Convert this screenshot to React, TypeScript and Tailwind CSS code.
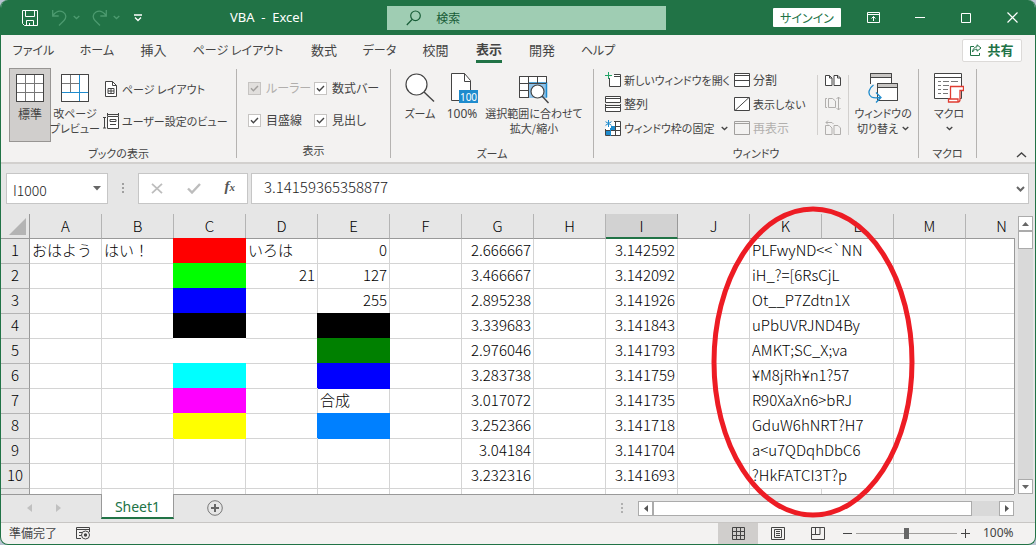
import { useState } from "react";
import type { ReactNode } from "react";

const tabs = [
  { label: "ファイル", width: "w-[65px] text-xs" },
  { label: "ホーム", width: "w-[62px] text-xs" },
  { label: "挿入", width: "w-[51px]" },
  { label: "ページ レイアウト", width: "w-[118px] text-xs" },
  { label: "数式", width: "w-[54px]" },
  { label: "データ", width: "w-[57px] text-xs" },
  { label: "校閲", width: "w-[55px]" },
  { label: "表示", width: "w-[52px]" },
  { label: "開発", width: "w-[54px]" },
  { label: "ヘルプ", width: "w-[58px] text-xs" },
];

const columns = ["A", "B", "C", "D", "E", "F", "G", "H", "I", "J", "K", "L", "M", "N"];

type Cell = { text?: string; fill?: string; right?: boolean };

const colG = ["2.666667", "3.466667", "2.895238", "3.339683", "2.976046", "3.283738", "3.017072", "3.252366", "3.04184", "3.232316"];
const colI = ["3.142592", "3.142092", "3.141926", "3.141843", "3.141793", "3.141759", "3.141735", "3.141718", "3.141704", "3.141693"];
const colK = ["PLFwyND<<`NN", "iH_?=[6RsCjL", "Ot__P7Zdtn1X", "uPbUVRJND4By", "AMKT;SC_X;va", "¥M8jRh¥n1?57", "R90XaXn6>bRJ", "GduW6hNRT?H7", "a<u7QDqhDbC6", "?HkFATCI3T?p"];

const cells: Record<string, Cell> = {
  A1: { text: "おはよう" },
  B1: { text: "はい！" },
  C1: { fill: "#ff0000" },
  C2: { fill: "#00ff00" },
  C3: { fill: "#0000ff" },
  C4: { fill: "#000000" },
  C5: { fill: "#ffffff" },
  C6: { fill: "#00ffff" },
  C7: { fill: "#ff00ff" },
  C8: { fill: "#ffff00" },
  D1: { text: "いろは" },
  D2: { text: "21", right: true },
  E1: { text: "0", right: true },
  E2: { text: "127", right: true },
  E3: { text: "255", right: true },
  E4: { fill: "#000000" },
  E5: { fill: "#008000" },
  E6: { fill: "#0000ff" },
  E7: { text: "合成" },
  E8: { fill: "#0080ff" },
};
colG.forEach((text, i) => (cells[`G${i + 1}`] = { text, right: true }));
colI.forEach((text, i) => (cells[`I${i + 1}`] = { text, right: true }));
colK.forEach((text, i) => (cells[`K${i + 1}`] = { text }));

function Svg({ w, h, children, className = "" }: { w: number; h: number; children: ReactNode; className?: string }) {
  return (
    <svg width={w} height={h} viewBox={`0 0 ${w} ${h}`} fill="none" stroke="#444" className={`shrink-0 ${className}`} aria-hidden="true">
      {children}
    </svg>
  );
}

function Chevron({ color = "#444" }: { color?: string }) {
  return (
    <Svg w={7} h={5}>
      <path d="M.7 1l2.8 2.6L6.3 1" stroke={color} strokeWidth="1.3" />
    </Svg>
  );
}

function TitleBar() {
  return (
    <header className="grid h-[35px] shrink-0 grid-cols-[387fr_279fr_370fr] items-center bg-[#217346] text-white">
      <div className="flex items-center">
        <button aria-label="保存" className="ml-[21px]">
          <Svg w={16} h={16}>
            <path d="M.5.5h15v15H2.5l-2-2zM3.5.5v6h9v-6M4.5 15.5v-5h7v5M7.5 13v2.5" stroke="#fff" />
          </Svg>
        </button>
        <button aria-label="元に戻す" className="ml-[14px] flex items-center gap-[6px]">
          <Svg w={15} h={17}>
            <path d="M.7 1v6h6M1 6.5C4 2.500 8 1.500 11 3c3.500 2 3.500 6 1 8.500L7 16.500" stroke="#4c9a6f" strokeWidth="1.3" />
          </Svg>
          <Chevron color="#4c9a6f" />
        </button>
        <button aria-label="やり直し" className="ml-[12px] flex items-center gap-[6px]">
          <Svg w={15} h={17}>
            <path d="M14.300 1v6h-6M14 6.500C11 2.500 7 1.500 4 3 .5 5 .5 9 3 11.500l5 5" stroke="#4c9a6f" strokeWidth="1.3" />
          </Svg>
          <Chevron color="#4c9a6f" />
        </button>
        <button aria-label="カスタマイズ" className="ml-[14px]">
          <Svg w={8} h={8}>
            <path d="M0 1h8M1 3.500l3 3 3-3" stroke="#fff" strokeWidth="1.3" />
          </Svg>
        </button>
        <h1 className="ml-[88px] font-[Noto_Sans,sans-serif] text-[13px] whitespace-pre">VBA  -  Excel</h1>
      </div>
      <label className="flex h-6 items-center bg-[#9fcdb3] pl-[19px]">
        <Svg w={16} h={16}>
          <circle cx="9.500" cy="5.800" r="4.800" stroke="#185c37" strokeWidth="1.2" />
          <path d="M6 9.500L.8 15" stroke="#185c37" strokeWidth="1.2" />
        </Svg>
        <input aria-label="検索" placeholder="検索" className="ml-[14px] min-w-0 flex-1 bg-transparent text-xs outline-none placeholder:text-[#185c37]" />
      </label>
      <div className="flex items-center justify-end pr-[17px]">
        <button className="mr-[25px] h-[19px] w-[68px] rounded-[1px] bg-white text-xs leading-[19px] text-[#217346]">サインイン</button>
        <button aria-label="リボンの表示オプション" className="flex w-[49px] justify-start pl-px">
          <Svg w={13} h={11}>
            <path d="M.5.5h12v10H.5zM.5 2.500h12M6.500 9V4.500M4.500 6.500l2-2 2 2" stroke="#fff" />
          </Svg>
        </button>
        <button aria-label="最小化" className="flex w-[46px] justify-start">
          <Svg w={10} h={1}>
            <path d="M0 .5h10" stroke="#fff" />
          </Svg>
        </button>
        <button aria-label="最大化" className="flex w-[46px] justify-start">
          <Svg w={10} h={10}>
            <path d="M.5.5h9v9h-9z" stroke="#fff" />
          </Svg>
        </button>
        <button aria-label="閉じる">
          <Svg w={11} h={11}>
            <path d="M.5.5l10 10M10.500.5l-10 10" stroke="#fff" strokeWidth="1.2" />
          </Svg>
        </button>
      </div>
    </header>
  );
}

function TabBar() {
  return (
    <nav className="flex h-[30px] shrink-0 items-center text-[13px]">
      {tabs.map((t) => (
        <button key={t.label} className={`flex h-[30px] shrink-0 items-center justify-center whitespace-nowrap ${t.width}`}>
          {t.label === "表示" ? (
            <span className="h-[25px] border-b-[3px] border-[#217346] pt-px leading-[20px] font-bold">{t.label}</span>
          ) : (
            t.label
          )}
        </button>
      ))}
      <button className="mr-[13px] ml-auto flex h-[23px] w-[60px] items-center justify-center gap-[5px] rounded-[2px] border border-[#dcdad8] bg-white font-bold text-[#217346]">
        <Svg w={12} h={12}>
          <path d="M4 2.500H.5v9h9V9M7 .8l4 3.200-4 3.200V5.200C5 5.200 3.500 6 2.500 8c.2-3 2-5 4.500-5.200z" stroke="#217346" />
        </Svg>
        共有
      </button>
    </nav>
  );
}

function Group({ title, width, children }: { title: string; width: string; children: ReactNode }) {
  return (
    <section className={`my-[4px] flex shrink-0 flex-col border-r border-[#b5b3b1] ${width}`}>
      <div className="-mt-px flex h-[74px]">{children}</div>
      <h2 className="pt-[3px] text-center text-[11px] leading-4">{title}</h2>
    </section>
  );
}

function BigButton({ icon, lines, className = "" }: { icon: ReactNode; lines: ReactNode[]; className?: string }) {
  return (
    <button className={`flex h-[74px] shrink-0 flex-col items-center border pt-1 leading-[15px] whitespace-nowrap ${className}`}>
      <span className="mb-[3px] flex h-[30px] items-center">{icon}</span>
      {lines.map((l, i) => (
        <span key={i} className="flex h-[15px] items-center gap-1">
          {l}
        </span>
      ))}
    </button>
  );
}

function SmallButton({ icon, label, disabled, menu, className = "" }: { icon: ReactNode; label: string; disabled?: boolean; menu?: boolean; className?: string }) {
  return (
    <button disabled={disabled} className={`flex h-6 items-center gap-[3px] whitespace-nowrap disabled:text-[#b1afad] ${className}`}>
      {icon}
      {label}
      {menu && (
        <span className="ml-1">
          <Chevron />
        </span>
      )}
    </button>
  );
}

function Check({ label, disabled }: { label: string; disabled?: boolean }) {
  const [on, setOn] = useState(true);
  return (
    <label className={`flex h-8 items-center gap-[5px] whitespace-nowrap ${disabled ? "text-[#b1afad]" : ""}`}>
      <span className={`relative flex h-[13px] w-[13px] shrink-0 items-center justify-center border border-[#c6c4c2] ${disabled ? "bg-[#e1dfdd]" : "bg-white"}`}>
        <input type="checkbox" checked={on} disabled={disabled} onChange={(e) => setOn(e.target.checked)} className="absolute inset-0 appearance-none" />
        {on && (
          <Svg w={9} h={7}>
            <path d="M1 3.300l2.400 2.400L8 1" stroke={disabled ? "#a19f9d" : "#444"} strokeWidth="1.4" />
          </Svg>
        )}
      </span>
      {label}
    </label>
  );
}

function Ribbon() {
  return (
    <div className="relative flex h-[97px] shrink-0 text-xs">
      <Group title="ブックの表示" width="w-[236px]">
        <BigButton
          className="ml-2 w-[42px] border-[#979593] bg-[#d0cecc]"
          lines={["標準"]}
          icon={
            <Svg w={28} h={28}>
              <path d="M.5.5h27v27H.5z" fill="#fff" />
              <path d="M9.500 1v26M18.500 1v26M1 9.500h26M1 18.500h26" stroke="#777" />
              <path d="M.5.5h27v27H.5z" />
            </Svg>
          }
        />
        <BigButton
          className="w-[48px] border-transparent text-[11px]"
          lines={["改ページ", "プレビュー"]}
          icon={
            <Svg w={28} h={28}>
              <path d="M.5.5h27v27H.5z" fill="#fff" />
              <path d="M9.500 1v17M1 9.500h17" stroke="#777" />
              <path d="M18.500 1v26M1 18.500h26" stroke="#1e8bcd" />
              <path d="M.5.5h27v27H.5z" />
            </Svg>
          }
        />
        <div className="ml-1 flex flex-col gap-2 pt-[9px] text-[11px]">
          <SmallButton
            label="ページ レイアウト"
            icon={
              <Svg w={16} h={16}>
                <path d="M2.500.5h7l4 4v11h-11z" fill="#fff" />
                <path d="M9.500.5v4h4M5 7.500h6v5H5zM8 7.500v5M5 10h6" />
              </Svg>
            }
          />
          <SmallButton
            label="ユーザー設定のビュー"
            icon={
              <Svg w={16} h={16}>
                <path d="M4.500 3.500h11v12h-11z" fill="#fff" />
                <path d="M4 1.500h12M4.500 0v3M15.500 0v3M1.500 4v11M0 4.500h3M0 15h3M7 6.500h6v2H7zM7 11.500h6" />
              </Svg>
            }
          />
        </div>
      </Group>

      <Group title="表示" width="w-[154px]">
        <div className="ml-[11px] grid h-16 grid-cols-[66px_66px] pt-1">
          <Check label="ルーラー" disabled />
          <Check label="数式バー" />
          <Check label="目盛線" />
          <Check label="見出し" />
        </div>
      </Group>

      <Group title="ズーム" width="w-[203px]">
        <BigButton
          className="ml-2 w-[42px] border-transparent text-[11px]"
          lines={["ズーム"]}
          icon={
            <Svg w={30} h={30}>
              <circle cx="11.500" cy="11.500" r="10.500" fill="#fff" strokeWidth="1.2" />
              <path d="M19 19l10 9.500" strokeWidth="1.4" />
            </Svg>
          }
        />
        <BigButton
          className="w-[42px] border-transparent font-[Noto_Sans,sans-serif]"
          lines={["100%"]}
          icon={
            <Svg w={28} h={30} className="ml-1">
              <path d="M1.500.5h13l6 7v20h-19z" fill="#fff" />
              <path d="M14.500.5v8h6" />
              <path d="M9 17h19v13H9z" fill="#1e8bcd" stroke="none" />
              <text x="18.500" y="27.500" textAnchor="middle" fill="#fff" stroke="none" fontSize="10">100</text>
            </Svg>
          }
        />
        <BigButton
          className="w-[102px] border-transparent text-[11px]"
          lines={["選択範囲に合わせて", "拡大/縮小"]}
          icon={
            <Svg w={30} h={28} className="mt-1">
              <path d="M.5.5h27v21H.5z" fill="#fff" />
              <path d="M9 7h19v15H9z" fill="#8fc3ea" stroke="none" />
              <path d="M9.500 7h18v14.500" stroke="#1e8bcd" strokeWidth="1.5" />
              <path d="M9.500 1v21M18.500 1v6M1 7.500h26M1 14.500h8M.5 21.500V.5h27V7M.5 21.500h9" />
              <circle cx="18.500" cy="15.500" r="6.500" fill="#fff" strokeWidth="1.2" />
              <path d="M23 20l6.500 7" strokeWidth="1.4" />
            </Svg>
          }
        />
      </Group>

      <Group title="ウィンドウ" width="w-[325px]">
        <div className="ml-[11px] flex w-[129px] shrink-0 flex-col">
          <SmallButton
            className="text-[11px]"
            label="新しいウィンドウを開く"
            icon={
              <Svg w={16} h={16}>
                <path d="M4.500 6v8.500h11V2.500H9" fill="#fff" />
                <path d="M9 4.500h6.500" />
                <path d="M3.500 0v7M0 3.500h7" stroke="#21a366" />
              </Svg>
            }
          />
          <SmallButton
            label="整列"
            icon={
              <Svg w={16} h={16}>
                <path d="M.5.5h15v6H.5zM.5 9.500h15v6H.5z" fill="#fff" />
                <path d="M.5 2.500h15M.5 8v3.500h15V8" />
              </Svg>
            }
          />
          <SmallButton
            className="text-[11px]"
            label="ウィンドウ枠の固定"
            menu
            icon={
              <Svg w={16} h={16}>
                <path d="M5 2h10.500v13.500H.5V8" fill="#fff" stroke="none" />
                <path d="M.5 9v6.500h15V1.500H9M10.500 2v13M6 6.500h9.500M.5 10.500h15" />
                <path d="M1 11h4v4H1zM6 6h4v4H6z" fill="#1e8bcd" stroke="none" />
                <path d="M5.500 8v8" stroke="#1e8bcd" />
                <path d="M3.500 0v7M.5 1.700l6 3.600M6.500 1.700l-6 3.600" stroke="#1e8bcd" />
              </Svg>
            }
          />
        </div>
        <div className="flex w-[84px] shrink-0 flex-col">
          <SmallButton
            label="分割"
            icon={
              <Svg w={16} h={14}>
                <path d="M.5.5h15v13H.5z" fill="#fff" />
                <path d="M.5 2.500h15M.5 7.500h15" />
              </Svg>
            }
          />
          <SmallButton
            className="text-[11px]"
            label="表示しない"
            icon={
              <Svg w={16} h={14}>
                <path d="M.5.5h15v13H.5zM1 13.500L15 .5" fill="#fff" />
              </Svg>
            }
          />
          <SmallButton
            disabled
            label="再表示"
            icon={
              <Svg w={16} h={14}>
                <path d="M.5.5h15v13H.5zM.5 2.500h15" stroke="#a19f9d" />
              </Svg>
            }
          />
        </div>
        <div className="mt-[7px] flex h-[60px] w-[32px] shrink-0 -translate-x-px flex-col items-center justify-between border-x border-[#d2d0ce]">
          <button aria-label="並べて比較">
            <Svg w={16} h={11}>
              <path d="M.5.5h4l2.500 2.500v7.500H.5zM9 .5h4L15.500 3v7.500H9z" fill="#fff" />
              <path d="M4.500.5V3H7M12.500.5V3h3" />
            </Svg>
          </button>
          <button disabled aria-label="同時にスクロール">
            <Svg w={16} h={15}>
              <path d="M2 2.500H.5v9H2M3.500 2.500h4L10.500 5v6.500h-7zM13.500 1v13M11.500 3l2-2 2 2M11.500 12l2 2 2-2" stroke="#b1afad" />
            </Svg>
          </button>
          <button disabled aria-label="ウィンドウの位置を元に戻す">
            <Svg w={16} h={15}>
              <path d="M.5 5.500h4L7 8v6.500H.5zM9 5.500h4L15.500 8v6.500H9zM1 2.500h6l1.500 1.500M3 .5l-2 2 2 2" stroke="#b1afad" />
            </Svg>
          </button>
        </div>
        <BigButton
          className="w-[66px] border-transparent text-[11px]"
          lines={["ウィンドウの", <>切り替え<Chevron /></>]}
          icon={
            <Svg w={30} h={30}>
              <path d="M2.500.5h21v15h-21z" fill="#fff" />
              <path d="M3 1h20v3H3z" fill="#c8c6c4" stroke="none" />
              <path d="M2.500 10V.5h21V9M2.500 4.500h21" />
              <path d="M0 11h9v13H0z" fill="#f3f2f1" stroke="none" />
              <path d="M9.500 10.500h20v17h-20z" fill="#fff" />
              <path d="M10 11h19v3H10z" fill="#c8c6c4" stroke="none" />
              <path d="M9.500 19V10.500h20v17H14M9.500 14.500h20" />
              <path d="M5.500 12C1 15-1 21 3.500 24c2 1 5 1 8.500.5M8 19.500l5 5-5 5" stroke="#1e8bcd" strokeWidth="1.3" />
            </Svg>
          }
        />
      </Group>

      <Group title="マクロ" width="w-[58px]">
        <BigButton
          className="ml-[7px] w-[46px] border-transparent text-[11px]"
          lines={["マクロ", <Chevron />]}
          icon={
            <Svg w={30} h={30}>
              <path d="M.5.5h27v25H.5z" fill="#fff" />
              <path d="M.5 4.500h27" />
              <path d="M4 8.500h3M9 8.500h6M17 8.500h7M4 12.500h3M9 12.500h6M4 16.500h3M9 16.500h5M4 20.500h3M9 20.500h5" stroke="#777" />
              <path d="M16.500 26V13.500H29.500v4H26v9c0 1.500-.5 2.500-2 2.500h-9.500v-3H24v3" fill="#fff" stroke="#e03c32" strokeWidth="1.300" />
            </Svg>
          }
        />
      </Group>
      <button aria-label="リボンを折りたたむ" className="mr-[8px] ml-auto self-end pb-1">
        <Svg w={11} h={6}>
          <path d="M1 5l4.500-4L10 5" strokeWidth="1.4" />
        </Svg>
      </button>
    </div>
  );
}

function FormulaBar() {
  return (
    <div className="flex h-[52px] shrink-0 items-start border-t-2 border-[#d2d0ce] bg-[#e6e6e6] pt-[9px] pr-[6px] pl-[5px] font-light text-[#222] [font-feature-settings:normal]">
      <label className="flex h-[31px] w-[102px] items-center border border-[#c6c6c6] bg-white">
        <input aria-label="名前ボックス" defaultValue="I1000" className="min-w-0 flex-1 bg-transparent pt-[3px] pl-[6px] text-sm outline-none" />
        <Svg w={8} h={5} className="mr-[6px]">
          <path d="M0 0h8L4 4.500z" fill="#666" stroke="none" />
        </Svg>
      </label>
      <Svg w={2} h={10} className="mx-[14px] mt-[10px]">
        <path d="M0 0h2v2H0zM0 4h2v2H0zM0 8h2v2H0z" fill="#a0a0a0" stroke="none" />
      </Svg>
      <div className="flex h-[31px] w-[110px] items-center justify-between border border-[#c6c6c6] bg-white pr-[12px] pl-[12px]">
        <button aria-label="キャンセル">
          <Svg w={12} h={11}>
            <path d="M1 .8l10 9.400M11 .8L1 10.200" stroke="#bdbdbd" strokeWidth="1.800" />
          </Svg>
        </button>
        <button aria-label="入力">
          <Svg w={14} h={11}>
            <path d="M1 5.500l4 4L13 1" stroke="#bdbdbd" strokeWidth="2.400" />
          </Svg>
        </button>
        <button aria-label="関数の挿入" className="pb-1 font-[Liberation_Serif,serif] text-[15px] leading-5 font-bold text-[#555] italic">
          f<span className="text-[11px]">x</span>
        </button>
      </div>
      <label className="ml-[3px] flex h-[31px] min-w-0 flex-1 items-center border border-[#c6c6c6] bg-white">
        <input aria-label="数式バー" defaultValue="3.14159365358877" className="min-w-0 flex-1 bg-transparent pb-[2px] pl-[12px] text-[15px] outline-none" />
        <Svg w={9} h={6} className="mr-[3px]">
          <path d="M1 1l3.500 3.500L8 1" stroke="#666" strokeWidth="2" />
        </Svg>
      </label>
    </div>
  );
}

function GridCell({ id, wide }: { id: string; wide?: boolean }) {
  const cell = cells[id];
  const fill = cell?.fill;
  return (
    <td
      colSpan={wide ? 2 : 1}
      className={`h-[25px] border-r border-b border-[#d4d4d4] px-[2px] pb-[2px] whitespace-nowrap ${cell?.right ? "text-right" : "text-left"}`}
      style={fill ? { backgroundColor: fill, borderColor: fill, boxShadow: `-1px -1px 0 0 ${fill}, 0 -1px 0 0 ${fill}` } : undefined}
    >
      {cell?.text}
    </td>
  );
}

function Sheet() {
  return (
    <div className="flex min-h-0 flex-1 bg-[#e6e6e6]">
      <div className="min-w-0 flex-1 overflow-hidden">
        <table className="w-[1037px] table-fixed border-separate border-spacing-0 bg-white text-[15px] leading-[22px] font-light text-black [font-feature-settings:normal]">
          <thead>
            <tr className="bg-[#e6e6e6]">
              <th className="h-[25px] w-[29px] border-r border-b border-[#999] pl-2">
                <Svg w={17} h={17}>
                  <path d="M17 0v17H0z" fill="#b4b4b4" stroke="none" />
                </Svg>
              </th>
              {columns.map((c) => (
                <th
                  key={c}
                  className={`h-[25px] w-[72px] border-r font-light ${c === "I" ? "border-b-2 border-r-[#999] border-b-[#217346] bg-[#d2d2d2]" : "border-b border-r-[#b4b4b4] border-b-[#999]"}`}
                >
                  {c}
                </th>
              ))}
            </tr>
          </thead>
          <tbody>
            {Array.from({ length: 11 }, (_, i) => i + 1).map((row) => (
              <tr key={row}>
                <th className="h-[25px] border-r border-b border-r-[#999] border-b-[#b4b4b4] bg-[#e6e6e6] pb-[2px] font-light">{row < 11 && row}</th>
                {columns.map((c) => {
                  // text in K runs over into L
                  if (c === "L" && row < 11) return null;
                  return <GridCell key={c} id={c + row} wide={c === "K" && row < 11} />;
                })}
              </tr>
            ))}
          </tbody>
        </table>
      </div>
      <div className="mt-6 w-px bg-[#999]" />
      <div className="mt-[2px] mr-[2px] ml-[3px] flex w-[15px] flex-col bg-[#d9d9d9]">
        <button aria-label="上へ" className="flex h-[15px] items-center justify-center border border-[#ababab] bg-white">
          <Svg w={7} h={4}>
            <path d="M0 4h7L3.500 0z" fill="#666" stroke="none" />
          </Svg>
        </button>
        <div className="h-[18px] border border-[#ababab] bg-white" />
        <button aria-label="下へ" className="mt-auto flex h-[15px] items-center justify-center border border-[#ababab] bg-white">
          <Svg w={7} h={4}>
            <path d="M0 0h7L3.500 4z" fill="#666" stroke="none" />
          </Svg>
        </button>
      </div>
    </div>
  );
}

function SheetTabs() {
  return (
    <div className="flex h-[28px] shrink-0 items-start bg-[#e6e6e6]">
      <div className="flex h-[28px] min-w-0 flex-1 items-start border-t border-[#999]">
        <button aria-label="前のシート" className="mt-[9px] ml-[26px]">
          <Svg w={5} h={8}>
            <path d="M5 0v8L0 4z" fill="#c0c0c0" stroke="none" />
          </Svg>
        </button>
        <button aria-label="次のシート" className="mt-[9px] ml-[24px]">
          <Svg w={5} h={8}>
            <path d="M0 0v8l5-4z" fill="#c0c0c0" stroke="none" />
          </Svg>
        </button>
        <button className="-mt-px ml-[40px] h-[25px] w-[73px] border-x border-b-2 border-x-[#999] border-b-[#217346] bg-white pt-px font-[Noto_Sans,sans-serif] text-sm leading-[24px] text-[#217346]">
          Sheet1
        </button>
        <button aria-label="新しいシート" className="mt-[5px] ml-[33px]">
          <Svg w={16} h={16}>
            <circle cx="8" cy="8" r="7.300" stroke="#777" />
            <path d="M8 4v8M4 8h8" stroke="#666" strokeWidth="2" />
          </Svg>
        </button>
        <Svg w={2} h={10} className="mt-[8px] ml-auto">
          <path d="M0 0h2v2H0zM0 4h2v2H0zM0 8h2v2H0z" fill="#b0b0b0" stroke="none" />
        </Svg>
        <div className="mt-[6px] ml-[15px] flex h-[15px] w-[376px] bg-[#d9d9d9]">
          <button aria-label="左へ" className="flex w-[15px] items-center justify-center border border-[#ababab] bg-white">
            <Svg w={4} h={7}>
              <path d="M4 0v7L0 3.500z" fill="#555" stroke="none" />
            </Svg>
          </button>
          <div className="w-[319px] border border-[#ababab] bg-white" />
          <button aria-label="右へ" className="ml-auto flex w-[15px] items-center justify-center border border-[#ababab] bg-white">
            <Svg w={4} h={7}>
              <path d="M0 0v7l4-3.500z" fill="#555" stroke="none" />
            </Svg>
          </button>
        </div>
      </div>
      <div className="w-[21px]" />
    </div>
  );
}

function StatusBar() {
  const [zoom, setZoom] = useState(100);
  return (
    <footer className="flex h-[22px] shrink-0 items-center border-t border-[#c8c6c4] pl-2 text-xs">
      <span className="pb-px">準備完了</span>
      <button aria-label="マクロの記録" className="ml-[19px]">
        <Svg w={15} h={13}>
          <path d="M5 11.500H.5V.5h13V5M.5 2.500h13M3 5.500h3M3 8.500h2" />
          <circle cx="9.500" cy="8" r="4" />
          <circle cx="9.500" cy="8" r="1.700" fill="#444" stroke="none" />
        </Svg>
      </button>
      <button aria-label="標準" className="ml-auto flex h-[21px] w-10 items-center justify-center bg-[#d0cecc]">
        <Svg w={13} h={13}>
          <path d="M.5.5h12v12H.5zM4.500 0v13M8.500 0v13M0 4.500h13M0 8.500h13" />
        </Svg>
      </button>
      <button aria-label="ページ レイアウト" className="flex w-10 items-center justify-center">
        <Svg w={14} h={13}>
          <path d="M.5.5h13v12H.5zM3.500 2.500h7v8h-7zM5 4.500h4M5 6.500h4M5 8.500h4" />
        </Svg>
      </button>
      <button aria-label="改ページ プレビュー" className="flex w-10 items-center justify-center">
        <Svg w={14} h={13}>
          <path d="M.5.5h13v12H.5zM4.500.5v7M.5 7.500h8.500v-7" />
        </Svg>
      </button>
      <button aria-label="縮小" className="ml-[5px] flex">
        <Svg w={9} h={9}>
          <path d="M0 4.500h9" />
        </Svg>
      </button>
      <input
        type="range"
        aria-label="ズーム"
        min={10}
        max={190}
        value={zoom}
        onChange={(e) => setZoom(Number(e.target.value))}
        className="mx-1 h-3 w-[101px] appearance-none bg-transparent [&::-webkit-slider-runnable-track]:h-px [&::-webkit-slider-runnable-track]:bg-[#a19f9d] [&::-webkit-slider-thumb]:-mt-[5px] [&::-webkit-slider-thumb]:h-[11px] [&::-webkit-slider-thumb]:w-[5px] [&::-webkit-slider-thumb]:appearance-none [&::-webkit-slider-thumb]:bg-[#666]"
      />
      <button aria-label="拡大" className="flex">
        <Svg w={9} h={9}>
          <path d="M0 4.500h9M4.500 0v9" />
        </Svg>
      </button>
      <span className="mr-[18px] ml-[13px] w-[34px] pb-px font-[Noto_Sans,sans-serif]">{zoom}%</span>
    </footer>
  );
}

export default function App() {
  return (
    <div className="bg-[#b9c4d2]">
      <div className="relative flex h-screen flex-col overflow-hidden rounded-lg border-x border-b border-[#217346] bg-[#f3f2f1] font-[Noto_Sans_CJK_JP,sans-serif] text-[#444] [font-feature-settings:'palt']">
        <TitleBar />
        <TabBar />
        <Ribbon />
        <FormulaBar />
        <Sheet />
        <SheetTabs />
        <StatusBar />
        {/* hand-drawn mark round the text column */}
        <svg width="204" height="312" viewBox="0 0 204 312" className="pointer-events-none absolute top-[206px] left-[710px]" aria-hidden="true">
          <ellipse cx="102" cy="156" rx="99" ry="153" fill="none" stroke="#ed1c24" strokeWidth="5" />
        </svg>
      </div>
    </div>
  );
}
